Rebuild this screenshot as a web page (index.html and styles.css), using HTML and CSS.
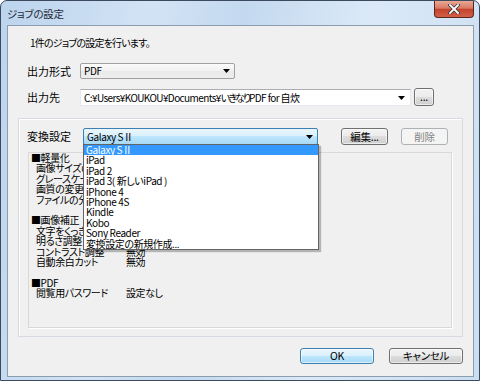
FILE: index.html
```html
<!DOCTYPE html>
<html lang="ja">
<head>
  <meta charset="UTF-8" />
  <title>ジョブの設定</title>
  <link rel="stylesheet" href="styles.css">
</head>
<body>
  <div class="window">
    <div class="titlebar">
      <span class="title">ジョブの設定</span>
      <div class="close">
        <svg width="12" height="10" viewBox="0 0 12 10">
          <path d="M2 1 L10 9 M10 1 L2 9" stroke="#3b3b3b" stroke-width="3.4" stroke-linecap="square" />
          <path d="M2 1 L10 9 M10 1 L2 9" stroke="#fff" stroke-width="1.8" stroke-linecap="square" />
        </svg>
      </div>
    </div>

    <div class="client">
      <p class="intro">1件のジョブの設定を行います。</p>

      <div class="row row-format">
        <span class="label">出力形式</span>
        <div class="combo combo-list">
          <span>PDF</span>
          <svg class="arrow" width="7" height="4" viewBox="0 0 7 4"><path d="M0 0 H7 L3.5 4 Z" fill="#000" /></svg>
        </div>
      </div>

      <div class="row row-dest">
        <span class="label">出力先</span>
        <div class="combo combo-edit">
          <span>C:¥Users¥KOUKOU¥Documents¥<span class="kana">いきなり</span>PDF for 自炊</span>
          <svg class="arrow" width="7" height="4" viewBox="0 0 7 4"><path d="M0 0 H7 L3.5 4 Z" fill="#000" /></svg>
        </div>
        <button class="btn btn-browse">...</button>
      </div>

      <div class="group">
        <div class="row row-preset">
          <span class="label label-preset">変換設定</span>
          <div class="preset">
            <div class="combo combo-focus">
              <span>Galaxy SⅡ</span>
              <svg class="arrow" width="7" height="4" viewBox="0 0 7 4"><path d="M0 0 H7 L3.5 4 Z" fill="#000" /></svg>
            </div>
            <ul class="droplist">
              <li class="selected">Galaxy SⅡ</li>
              <li>iPad</li>
              <li>iPad 2</li>
              <li>iPad 3( 新しいiPad )</li>
              <li>iPhone 4</li>
              <li>iPhone 4S</li>
              <li>Kindle</li>
              <li>Kobo</li>
              <li>Sony Reader</li>
              <li>変換設定の新規作成...</li>
            </ul>
          </div>
          <button class="btn btn-edit">編集...</button>
          <button class="btn btn-delete" disabled>削除</button>
        </div>

        <div class="details">
          <div class="head">■軽量化</div>
          <div class="item"><span class="key">画像サイズの変更</span></div>
          <div class="item"><span class="key">グレースケール化</span></div>
          <div class="item"><span class="key">画質の変更</span></div>
          <div class="item"><span class="key">ファイルの分割</span></div>
          <div class="blank"></div>
          <div class="head">■画像補正</div>
          <div class="item"><span class="key">文字をくっきり</span></div>
          <div class="item"><span class="key">明るさ調整</span></div>
          <div class="item"><span class="key">コントラスト調整</span><span>無効</span></div>
          <div class="item"><span class="key">自動余白カット</span><span>無効</span></div>
          <div class="blank"></div>
          <div class="head">■PDF</div>
          <div class="item"><span class="key">閲覧用パスワード</span><span>設定なし</span></div>
        </div>
      </div>

      <div class="footer">
        <button class="btn btn-default">OK</button>
        <button class="btn">キャンセル</button>
      </div>
    </div>
  </div>
</body>
</html>
```

FILE: styles.css
```css
* {
  box-sizing: border-box;
}

body {
  margin: 0;
  font-family: "Noto Sans CJK JP", sans-serif;
  font-size: 11px;
  font-feature-settings: "palt";
  color: #000;
}

.window {
  width: 480px;
  height: 381px;
  border: 1px solid #3b4a5c;
  border-radius: 7px 7px 0 0;
  background: linear-gradient(100deg, #bcd4ed 0%, #d2e3f5 28%, #c3d9ef 45%, #dbe9f7 68%, #cadef2 100%);
  overflow: hidden;
}

.titlebar {
  height: 24px;
  display: flex;
  align-items: flex-start;
}

.title {
  padding: 6px 0 0 6px;
  line-height: 13px;
  font-size: 10.5px;
  letter-spacing: -0.3px;
  color: #1e2a38;
}

.close {
  margin-left: auto;
  margin-right: 5px;
  width: 40px;
  height: 17px;
  border: 1px solid #5e2619;
  border-top: none;
  border-radius: 0 0 4px 4px;
  background: linear-gradient(#e9a895, #d97a64 45%, #c5432b 52%, #d0604a);
  display: flex;
  align-items: center;
  justify-content: center;
}

.client {
  margin-left: 6px;
  width: 467px;
  height: 352px;
  border: 1px solid #8d9db0;
  background: #f0f0f0;
}

.intro {
  margin: 0;
  padding: 10px 0 0 22px;
  line-height: 13px;
  font-size: 10px;
  letter-spacing: -0.8px;
}

.row {
  display: flex;
  align-items: flex-start;
}

.label {
  width: 53px;
  line-height: 16px;
}

.row-format {
  margin-top: 14px;
  height: 16px;
  padding-left: 19px;
}

.row-dest {
  margin-top: 9px;
  height: 18px;
  padding-left: 19px;
}

.row-dest .label {
  line-height: 18px;
}

.combo {
  display: flex;
  align-items: center;
  padding-left: 3px;
  line-height: 14px;
  font-size: 10px;
  letter-spacing: -0.4px;
  white-space: nowrap;
}

.arrow {
  margin-left: auto;
  margin-right: 4px;
  flex: none;
}

.combo-list {
  width: 155px;
  height: 16px;
  border: 1px solid #a0a0a0;
  border-radius: 2px;
  background: linear-gradient(#fbfbfb, #f1f1f1 50%, #e9e9e9 50%, #eeeeee);
}

.combo-edit {
  margin-top: 1px;
  width: 331px;
  height: 17px;
  border: 1px solid #e3e9ef;
  border-top-color: #abadb3;
  background: #fff;
  letter-spacing: -0.6px;
}

.combo-edit .kana {
  letter-spacing: -2px;
}

.combo-edit .arrow {
  margin-right: 5px;
}

.combo-focus {
  width: 235px;
  height: 17px;
  border: 1px solid #3c7fb1;
  border-radius: 2px;
  background: linear-gradient(#eaf6fd, #d9f0fc 50%, #bee6fd 50%, #a7d9f5);
}

.btn {
  font: inherit;
  font-size: 10.5px;
  font-feature-settings: "palt";
  letter-spacing: -0.3px;
  color: #000;
  padding: 0;
  border: 1px solid #707070;
  border-radius: 3px;
  background: linear-gradient(#f2f2f2, #ebebeb 50%, #dddddd 50%, #cfcfcf);
  box-shadow: inset 0 0 0 1px rgba(255, 255, 255, 0.6);
  line-height: 14px;
}

.btn-browse {
  margin-left: 3px;
  width: 20px;
  height: 18px;
}

.group {
  margin: 12px 0 0 10px;
  width: 445px;
  height: 219px;
  border: 1px solid #d5dbe0;
  box-shadow: inset 1px 1px 0 #fff;
}

.row-preset {
  padding: 9px 0 0 8px;
}

.label-preset {
  width: 56px;
  line-height: 17px;
}

.preset {
  position: relative;
}

.btn-edit {
  margin-left: 23px;
  width: 47px;
  height: 17px;
}

.btn-delete {
  margin-left: 13px;
  width: 47px;
  height: 17px;
}

.btn:disabled {
  color: #838383;
  border-color: #adb2b5;
  background: #f4f4f4;
  box-shadow: none;
}

.droplist {
  position: absolute;
  left: 0;
  top: 16px;
  z-index: 2;
  width: 236px;
  height: 106px;
  margin: 0;
  padding: 0;
  list-style: none;
  background: #fff;
  border: 1px solid #646464;
  box-shadow: 2px 2px 1px rgba(0, 0, 0, 0.25);
  font-size: 10px;
  letter-spacing: -0.4px;
  line-height: 10.4px;
}

.droplist li {
  height: 10.4px;
  padding-left: 2px;
  white-space: nowrap;
}

.droplist .selected {
  background: #3399ff;
  color: #fff;
}

.details {
  margin: 7px 0 0 9px;
  width: 424px;
  height: 176px;
  border: 1px solid #d9d9d9;
  box-shadow: 1px 1px 0 #fff;
  padding: 0 0 0 2px;
  font-size: 10px;
  letter-spacing: -0.4px;
  line-height: 10.4px;
}

.head,
.item,
.blank {
  height: 10.4px;
  white-space: nowrap;
}

.item {
  display: flex;
  padding-left: 5px;
}

.key {
  width: 90px;
}

.footer {
  display: flex;
  justify-content: flex-end;
  gap: 15px;
  margin-top: 11px;
  padding-right: 10px;
}

.footer .btn {
  width: 74px;
  height: 16px;
}

.btn-default {
  border-color: #3c7fb1;
  background: linear-gradient(#eaf6fd, #d9f0fc 50%, #bee6fd 50%, #a7d9f5);
}
```
